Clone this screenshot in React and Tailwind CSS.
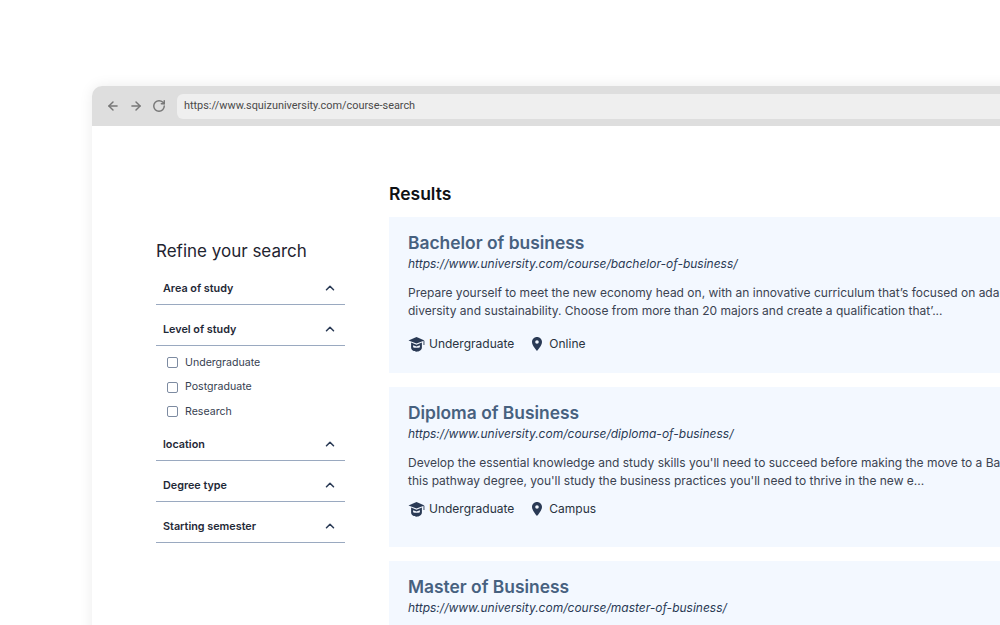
import React from "react";
import { ArrowLeft, ArrowRight, RotateCw, ChevronUp } from "lucide-react";

function Cap() {
  return (
    <svg width="17" height="16" viewBox="0 0 16 16" className="shrink-0">
      <path d="M8 1 L16 4.6 L8 7.6 L0 4.6 Z" fill="#2a3a55" />
      <path d="M2.6 6.6 L8 8.8 L13.4 6.6 V11.5 C13.4 14 10.5 15.7 8 15.7 C5.5 15.7 2.6 14 2.6 11.5 Z" fill="#2a3a55" />
      <path d="M4.6 9.2 L8 10.5 L11.4 9.2 V11.2 C10 12 6 12 4.6 11.2 Z" fill="#f3f8ff" />
      <rect x="15" y="5" width="0.9" height="4" fill="#2a3a55" />
    </svg>
  );
}

function Pin() {
  return (
    <svg width="10" height="14" viewBox="0 0 10 14" className="shrink-0">
      <path fillRule="evenodd" d="M5 0 C2.2 0 0 2.2 0 5 C0 8.5 5 14 5 14 C5 14 10 8.5 10 5 C10 2.2 7.8 0 5 0 Z M5 3.2 A1.8 1.8 0 1 1 5 6.8 A1.8 1.8 0 1 1 5 3.2 Z" fill="#2a3a55" />
    </svg>
  );
}

function Section({ label, children }) {
  return (
    <div>
      <div className="flex h-[41px] items-end justify-between border-b border-[#9aa9c0] pb-[9px] pl-[7px] pr-[8px]">
        <span className="text-[10.8px] font-semibold leading-[12px] text-[#1f2937]">{label}</span>
        <ChevronUp size={14} strokeWidth={2.6} className="text-[#2a3a55]" />
      </div>
      {children}
    </div>
  );
}

function Check({ label }) {
  return (
    <div className="flex h-[24.5px] items-center gap-[7px] pl-[11px]">
      <span className="h-[11px] w-[11px] rounded-[2px] border border-[#7d8ba1] bg-white" />
      <span className="text-[10.6px] text-[#374151]">{label}</span>
    </div>
  );
}

function Card({ title, url, lines, level, place, height, rowGap }) {
  return (
    <div className={`${height} w-[700px] shrink-0 overflow-hidden bg-[#f3f8ff] pl-[19px] pt-[14px]`}>
      <h3 className="text-[17.4px] font-semibold leading-[24px] text-[#47617f]">{title}</h3>
      <p className="text-[12px] italic leading-[18px] text-[#2a3a55]">{url}</p>
      <div className="mt-[11px] whitespace-nowrap text-[12px] leading-[17.5px] text-[#3b4351]">
        <p>{lines[0]}</p>
        <p>{lines[1]}</p>
      </div>
      {level && (
        <div className={`${rowGap} flex items-center text-[12px] text-[#2a3340]`}>
          <Cap />
          <span className="ml-[4px]">{level}</span>
          <span className="ml-[18px]"><Pin /></span>
          <span className="ml-[7px]">{place}</span>
        </div>
      )}
    </div>
  );
}

export default function App() {
  return (
    <div className="h-[625px] w-[1000px] overflow-hidden bg-white pl-[92px] pt-[86px] font-['Inter','Noto_Sans',sans-serif]">
      <div className="h-[560px] w-[960px] rounded-t-[10px] bg-white shadow-[0_0_14px_rgba(0,0,0,0.08)]">
        <div className="flex h-[40px] items-center rounded-t-[10px] bg-[#dedede] pl-[14px]">
          <div className="flex items-center gap-[9px] text-[#777777]">
            <ArrowLeft size={14} strokeWidth={2.5} />
            <ArrowRight size={14} strokeWidth={2.5} />
            <RotateCw size={14} strokeWidth={2.5} />
          </div>
          <div className="ml-[11px] flex h-[25px] flex-1 items-center rounded-l-[6px] bg-[#efefef] pl-[7px] font-['Roboto',sans-serif] text-[10.9px] text-[#4a4a4a]">
            https://www.squizuniversity.com/course-search
          </div>
        </div>
        <div className="flex pl-[64px]">
          <aside className="w-[189px] shrink-0 pt-[113px]">
            <h2 className="text-[17px] leading-[24px] text-[#1f2430]">Refine your search</h2>
            <div className="pt-[1px]">
              <Section label="Area of study" />
              <Section label="Level of study">
                <div className="h-[74px] pt-[4.5px]">
                  <Check label="Undergraduate" />
                  <Check label="Postgraduate" />
                  <Check label="Research" />
                </div>
              </Section>
              <Section label="location" />
              <Section label="Degree type" />
              <Section label="Starting semester" />
            </div>
          </aside>
          <main className="ml-[44px] flex flex-col gap-[14px] pt-[57px]">
            <h2 className="-mb-[14px] h-[34px] text-[17.5px] font-semibold leading-[22px] text-[#0f1115]">Results</h2>
            <Card
              height="h-[156px]"
              rowGap="mt-[16px]"
              title="Bachelor of business"
              url="https://www.university.com/course/bachelor-of-business/"
              lines={["Prepare yourself to meet the new economy head on, with an innovative curriculum that’s focused on adaptability,", "diversity and sustainability. Choose from more than 20 majors and create a qualification that’..."]}
              level="Undergraduate"
              place="Online"
            />
            <Card
              height="h-[160px]"
              rowGap="mt-[11px]"
              title="Diploma of Business"
              url="https://www.university.com/course/diploma-of-business/"
              lines={["Develop the essential knowledge and study skills you'll need to succeed before making the move to a Bachelor's", "this pathway degree, you'll study the business practices you'll need to thrive in the new e..."]}
              level="Undergraduate"
              place="Campus"
            />
            <Card
              height="h-[160px]"
              title="Master of Business"
              url="https://www.university.com/course/master-of-business/"
              lines={["", ""]}
            />
          </main>
        </div>
      </div>
    </div>
  );
}
